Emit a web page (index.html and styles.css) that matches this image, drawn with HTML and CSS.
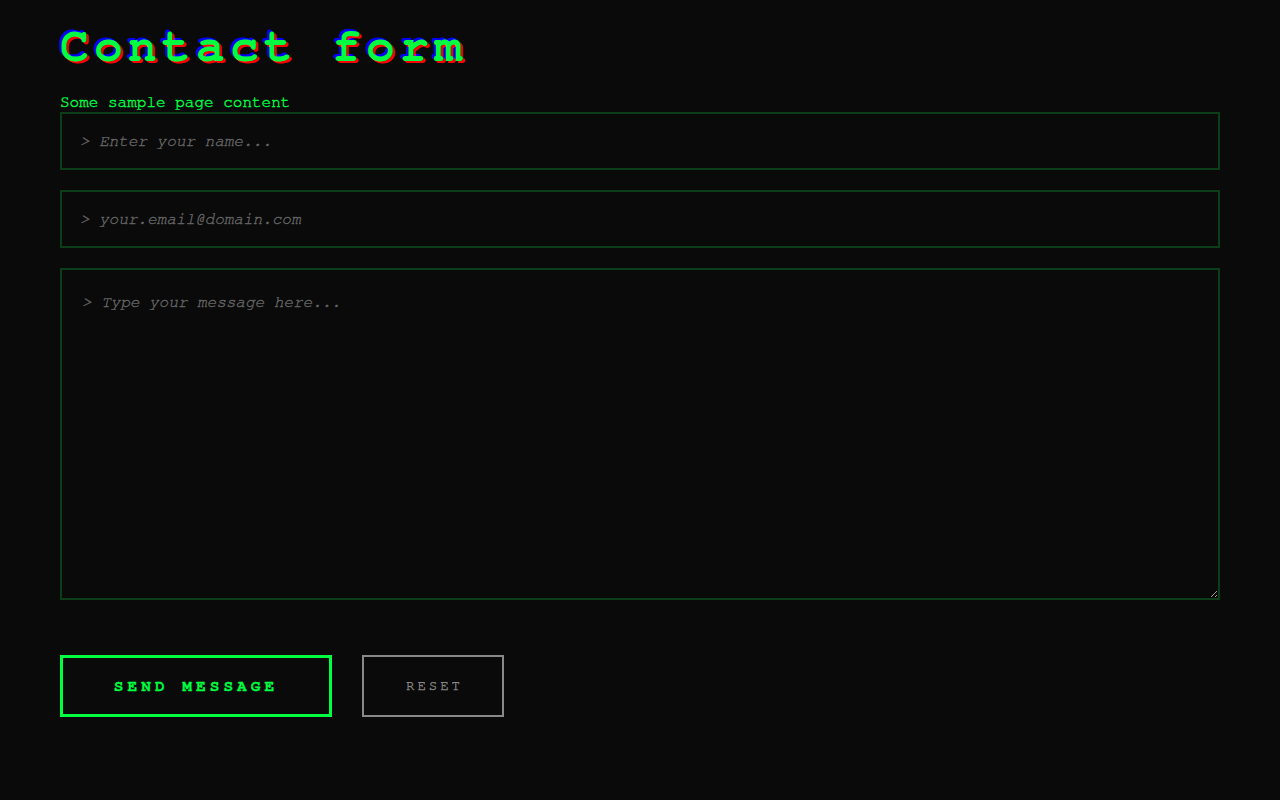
FILE: index.html
```html
<!DOCTYPE html>
<html lang="en">
<head>
<meta charset="utf-8">
<title>Contact form</title>
<link rel="stylesheet" href="styles.css">
</head>
<body>
<main class="page">
  <h1 class="title">Contact form</h1>
  <p class="intro">Some sample page content</p>
  <form class="form">
    <input class="field" type="text" placeholder="&gt; Enter your name...">
    <input class="field" type="email" placeholder="&gt; your.email@domain.com">
    <textarea class="field area" placeholder="&gt; Type your message here..."></textarea>
    <div class="actions">
      <button class="btn btn-send" type="button">SEND MESSAGE</button>
      <button class="btn btn-reset" type="button">RESET</button>
    </div>
  </form>
</main>
</body>
</html>
```

FILE: styles.css
```css
html, body {
  margin: 0;
  padding: 0;
  background: #0a0a0a;
}
body {
  font-family: "FreeMono", "TeX Gyre Cursor", "Liberation Mono", monospace;
  color: #00ff41;
}
.page {
  padding: 0 60px;
}
.title {
  margin: 20px 0 19px;
  font-size: 48px;
  font-weight: bold;
  letter-spacing: 5.2px;
  line-height: 54px;
  color: #00ff41;
  text-shadow: 2px 2px 0 #ff0000, -2px -2px 0 #0000ff;
}
.intro {
  margin: 0 0 1px;
  font-size: 16px;
  line-height: 18px;
  -webkit-text-stroke: 0.4px #00ff41;
}
.form {
  display: flex;
  flex-direction: column;
  gap: 20px;
}
.field {
  box-sizing: border-box;
  width: 100%;
  height: 58px;
  margin: 0;
  padding: 18px 18px;
  background: #0a0a0a;
  border: 2px solid #0b3d18;
  color: #00ff41;
  font-family: "FreeMono", "TeX Gyre Cursor", "Liberation Mono", monospace;
  font-size: 16px;
  line-height: 18px;
  outline: none;
  border-radius: 0;
}
.field::placeholder {
  color: #666666;
  font-style: italic;
  opacity: 1;
  -webkit-text-stroke: 0.35px #666666;
}
.area {
  display: block;
  height: 332px;
  padding: 20px;
  line-height: 25.6px;
  resize: vertical;
}
.actions {
  display: flex;
  gap: 30px;
  margin-top: 35px;
}
.btn {
  box-sizing: border-box;
  height: 62px;
  display: inline-flex;
  align-items: center;
  justify-content: center;
  background: transparent;
  font-family: "FreeMono", "TeX Gyre Cursor", "Liberation Mono", monospace;
  cursor: pointer;
  border-radius: 0;
}
.btn-send {
  width: 272px;
  border: 3px solid #00ff41;
  color: #00ff41;
  font-size: 16px;
  font-weight: bold;
  letter-spacing: 4.1px;
  padding: 0;
  -webkit-text-stroke: 0.3px #00ff41;
}
.btn-reset {
  width: 142px;
  border: 2px solid #888888;
  color: #888888;
  font-size: 14px;
  letter-spacing: 3px;
  padding: 0 0 0 3px;
  -webkit-text-stroke: 0.35px #888888;
}
```
